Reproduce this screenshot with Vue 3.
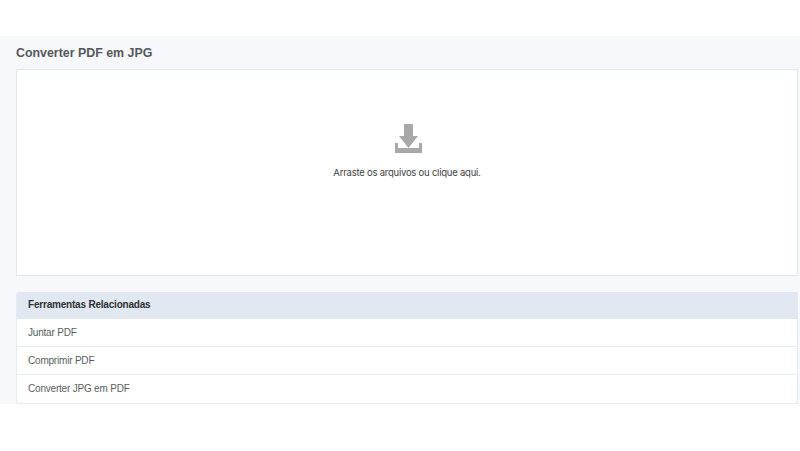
<script setup>
const tools = ['Juntar PDF', 'Comprimir PDF', 'Converter JPG em PDF']
</script>

<template>
  <div class="page">
    <div class="topbar"></div>
    <main class="content">
      <h1 class="title">Converter PDF em JPG</h1>
      <div class="dropzone">
        <svg class="icon" width="27" height="29" viewBox="0 0 27 29">
          <path d="M9 0h9v12h5L13.500 24 4 12h5z" fill="#a8a8a8" />
          <path d="M0 19h3v5h21v-5h3v10H0z" fill="#a8a8a8" />
        </svg>
        <p class="hint">Arraste os arquivos ou clique aqui.</p>
      </div>
      <section class="card">
        <div class="card-head">Ferramentas Relacionadas</div>
        <div v-for="tool in tools" :key="tool" class="card-row">{{ tool }}</div>
      </section>
    </main>
  </div>
</template>

<style>
html, body {
  background: #fff;
}
</style>

<style scoped>
.page {
  font-family: "Liberation Sans", Arial, sans-serif;
  width: 800px;
  height: 451px;
  overflow: hidden;
}

.topbar {
  height: 36px;
  background: #fff;
}

.content {
  background: #f6f8fb;
  padding: 0 2px 0 16px;
  height: 368px;
  box-sizing: border-box;
}

.title {
  margin: 0;
  padding-top: 8px;
  height: 33px;
  box-sizing: border-box;
  font-size: 12.4px;
  line-height: 18px;
  font-weight: 700;
  color: #55585b;
}

.dropzone {
  height: 207px;
  box-sizing: border-box;
  background: #fff;
  border: 1px solid #e1e8ee;
  display: flex;
  flex-direction: column;
  align-items: center;
  padding-top: 54px;
}

.icon {
  display: block;
  margin-left: 2px;
}

.hint {
  margin: 13px 0 0;
  font-family: Inter, "Liberation Sans", sans-serif;
  font-size: 9.5px;
  letter-spacing: -0.23px;
  line-height: 14px;
  color: #3f4246;
}

.card {
  margin-top: 16px;
  background: #fff;
  border: 1px solid #e4ebf2;
  border-top: 0;
  border-radius: 3px;
}

.card-head {
  height: 27px;
  background: #e1e8f2;
  padding-left: 11px;
  font-size: 10px;
  letter-spacing: -0.2px;
  line-height: 26px;
  font-weight: 700;
  color: #2e3236;
}

.card-row {
  height: 28px;
  box-sizing: border-box;
  padding-left: 11px;
  border-bottom: 1px solid #e6edf2;
  font-size: 10px;
  letter-spacing: -0.2px;
  line-height: 27px;
  color: #5a5d60;
}

.card-row:last-child {
  border-bottom: 0;
}
</style>
